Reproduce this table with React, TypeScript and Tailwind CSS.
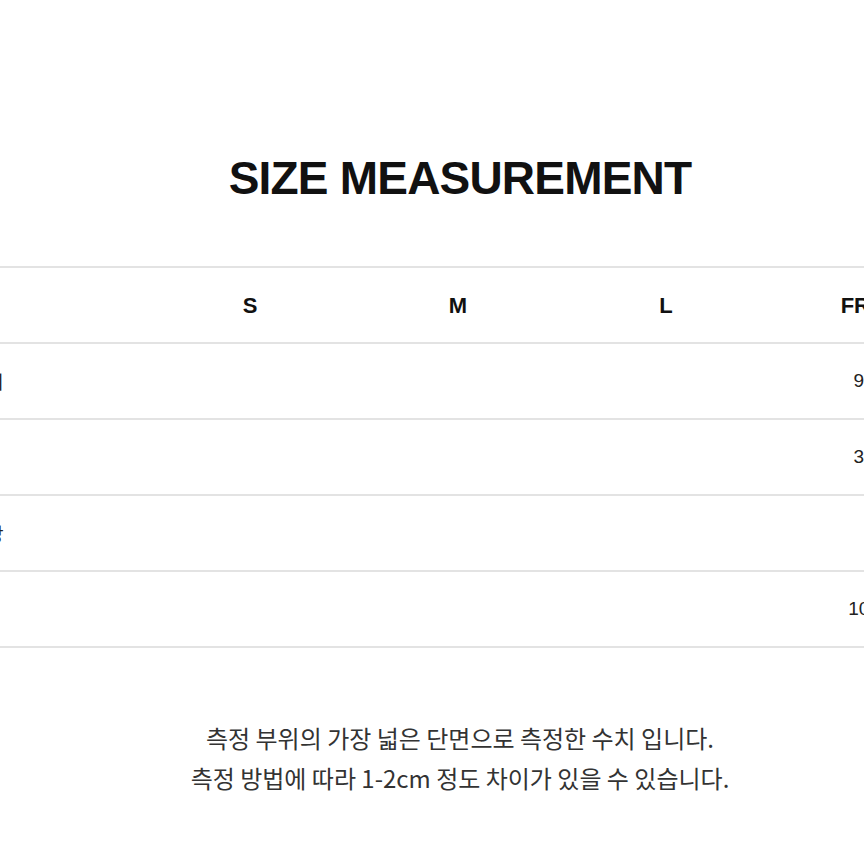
import React from "react";

const rows = [
  { label: "허리", value: "95.5" },
  { label: "폭", value: "35.5" },
  { label: "총장", value: "-" },
  { label: "힙", value: "102.5" },
];

const sizes = ["S", "M", "L"];

export default function App() {
  return (
    <div className="w-[864px] h-[864px] bg-white overflow-hidden flex flex-col">
      <div className="pt-[150px] h-[266px] pl-[56px]">
        <h1
          className="text-center text-[46px] leading-[56px] font-bold tracking-[-0.8px] text-[#111]"
          style={{ fontFamily: '"Liberation Sans", Arial, sans-serif' }}
        >
          SIZE MEASUREMENT
        </h1>
      </div>

      <div className="w-full overflow-hidden">
        <div
          className="-ml-[178px] w-[1150px] border-t-2 border-[#e3e3e3]"
          style={{ fontFamily: '"Liberation Sans", Arial, "Noto Sans CJK KR", sans-serif' }}
        >
          <div className="flex h-[76px] border-b-2 border-[#e3e3e3] items-center">
            <div className="w-[324px]" />
            {sizes.map((s) => (
              <div
                key={s}
                className="w-[208px] text-center text-[22px] font-bold text-[#111]"
              >
                {s}
              </div>
            ))}
            <div className="w-[200px] text-center text-[22px] font-bold text-[#111]">
              FREE
            </div>
          </div>
          {rows.map((r) => (
            <div
              key={r.label}
              className="flex h-[76px] border-b-2 border-[#e3e3e3] items-center"
            >
              <div
                className="w-[330px] text-center text-[18px] text-[#222]"
                style={{ fontFamily: '"Noto Sans CJK KR", sans-serif' }}
              >
                {r.label}
              </div>
              <div className="w-[207px]" />
              <div className="w-[205px]" />
              <div className="w-[208px]" />
              <div className="w-[200px] text-center text-[19px] text-[#222]">
                {r.value}
              </div>
            </div>
          ))}
        </div>
      </div>

      <div
        className="mt-[70px] pl-[56px] text-center text-[24px] leading-[40px] text-[#333]"
        style={{ fontFamily: '"Noto Sans CJK KR", sans-serif' }}
      >
        <p>측정 부위의 가장 넓은 단면으로 측정한 수치 입니다.</p>
        <p>측정 방법에 따라 1-2cm 정도 차이가 있을 수 있습니다.</p>
      </div>
    </div>
  );
}
